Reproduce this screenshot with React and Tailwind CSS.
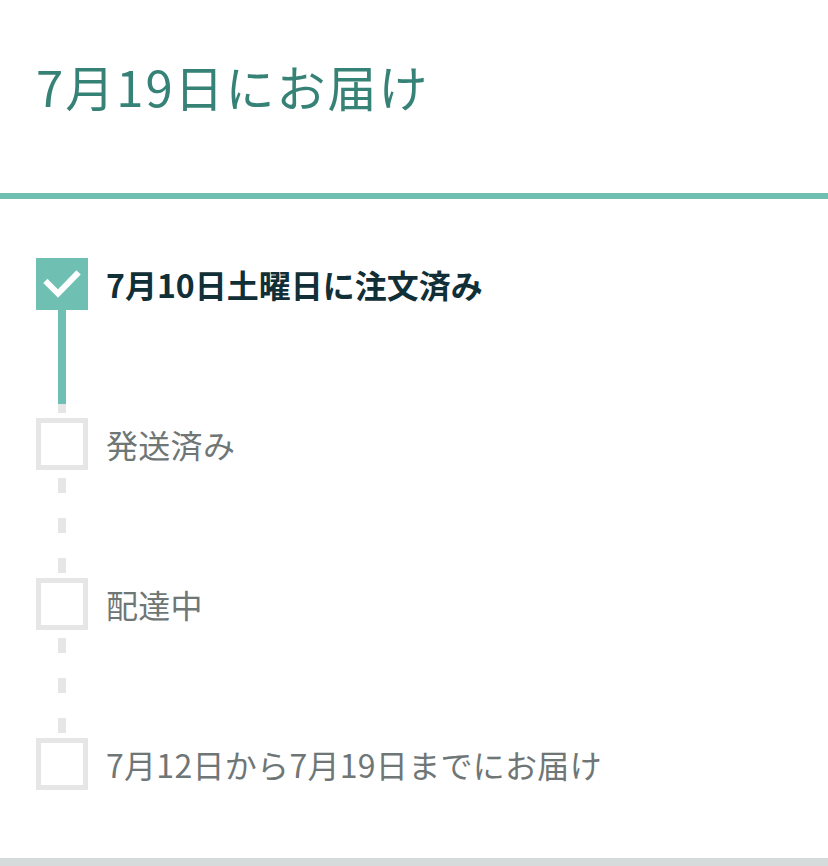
import React from "react";

const FONT = { fontFamily: '"Noto Sans CJK JP", "Noto Sans", sans-serif' };

function CheckedBox() {
  return (
    <div className="w-[52px] h-[52px] bg-[#6fc0b3] flex items-center justify-center shrink-0">
      <svg width="52" height="52" viewBox="0 0 52 52">
        <path d="M11.5 25 L22 35.5 L40.5 16.5" fill="none" stroke="#ffffff" strokeWidth="6" strokeLinecap="square" />
      </svg>
    </div>
  );
}

function EmptyBox() {
  return <div className="w-[52px] h-[52px] border-[5px] border-[#e6e6e6] bg-white shrink-0" />;
}

function Step({ checked, label }) {
  return (
    <div className="flex items-center gap-[18px] h-[52px]">
      {checked ? <CheckedBox /> : <EmptyBox />}
      <span
        className={
          checked
            ? "text-[32px] leading-none font-bold text-[#102f36] whitespace-nowrap"
            : "text-[32px] leading-none tracking-[0.3px] text-[#6f7676] whitespace-nowrap"
        }
      >
        {label}
      </span>
    </div>
  );
}

function DashedConnector() {
  return (
    <div className="w-[52px] h-[108px] flex flex-col items-center">
      <div className="h-[8px]" />
      <div className="w-[8px] h-[15px] bg-[#e6e6e6]" />
      <div className="h-[25px]" />
      <div className="w-[8px] h-[15px] bg-[#e6e6e6]" />
      <div className="h-[25px]" />
      <div className="w-[8px] h-[15px] bg-[#e6e6e6]" />
    </div>
  );
}

function SolidConnector() {
  return (
    <div className="w-[52px] h-[108px] flex flex-col items-center">
      <div className="w-[8px] h-[94px] bg-[#6fc0b3]" />
      <div className="w-[8px] h-[9px] bg-[#e6e6e6]" />
    </div>
  );
}

export default function App() {
  return (
    <div className="w-[828px] h-[866px] bg-white flex flex-col overflow-hidden" style={FONT}>
      <div className="h-[193px] px-[36px] pt-[61px]">
        <h1 className="text-[49px] leading-[50px] tracking-[2px] text-[#378276] font-normal whitespace-nowrap">
          7月19日にお届け
        </h1>
      </div>
      <div className="h-[6px] bg-[#6fc0b3]" />
      <div className="flex-1 px-[36px] pt-[59px] flex flex-col">
        <Step checked label="7月10日土曜日に注文済み" />
        <SolidConnector />
        <Step label="発送済み" />
        <DashedConnector />
        <Step label="配達中" />
        <DashedConnector />
        <Step label="7月12日から7月19日までにお届け" />
      </div>
      <div className="h-[8px] bg-[#d5dbdb]" />
    </div>
  );
}
